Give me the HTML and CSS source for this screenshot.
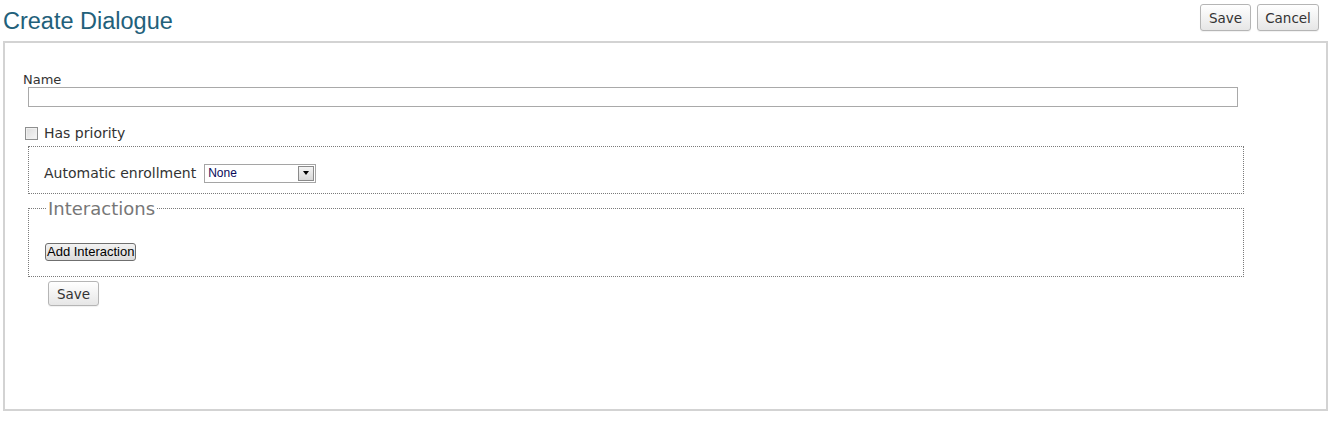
FILE: index.html
```html
<!DOCTYPE html>
<html>
<head>
<meta charset="utf-8">
<link rel="stylesheet" href="styles.css">
</head>
<body>
<div class="header">
  <h1 class="title">Create Dialogue</h1>
  <div class="actions">
    <button class="btn btn-save">Save</button>
    <button class="btn btn-cancel">Cancel</button>
  </div>
</div>
<div class="box">
  <div class="form">
    <label class="name-label">Name</label>
    <div class="text-input"></div>
    <div class="check-row">
      <span class="checkbox"></span>
      <span class="check-label">Has priority</span>
    </div>
    <fieldset class="group plain">
      <div class="enroll-row">
        <span class="enroll-label">Automatic enrollment</span>
        <div class="select">
          <span class="select-value">None</span>
          <span class="select-arrow"><span class="tri"></span></span>
        </div>
      </div>
    </fieldset>
    <fieldset class="group interactions">
      <legend class="legend">Interactions</legend>
      <button class="add-btn">Add Interaction</button>
    </fieldset>
    <button class="btn btn-save save-bottom">Save</button>
  </div>
</div>
</body>
</html>
```
FILE: styles.css
```css
html, body {
  margin: 0;
  padding: 0;
  background: #fff;
}
body {
  padding: 0 6px 0 3px;
  font-family: "DejaVu Sans", Verdana, sans-serif;
  color: #333;
}
.header {
  height: 41px;
  display: flex;
  justify-content: space-between;
  align-items: flex-start;
  padding-right: 9px;
}
.title {
  margin: 8px 0 0 0;
  font-family: "Liberation Sans", Arial, sans-serif;
  font-weight: normal;
  font-size: 23.5px;
  line-height: normal;
  color: #22607a;
}
.actions {
  display: flex;
  gap: 6px;
  margin-top: 4px;
}
.btn {
  box-sizing: border-box;
  font-family: "DejaVu Sans", Verdana, sans-serif;
  font-size: 13.5px;
  color: #333;
  height: 27px;
  padding: 0;
  border: 1px solid #b5b5b5;
  border-radius: 3px;
  background: linear-gradient(#ffffff, #e6e6e6);
  box-shadow: 0 1px 1px rgba(0,0,0,0.06);
  cursor: pointer;
}
.btn-save {
  width: 51px;
}
.btn-cancel {
  width: 62px;
}
.box {
  box-sizing: border-box;
  height: 370px;
  border: 2px solid #d3d3d3;
  padding: 0 0 0 18px;
}
.form {
  width: 1221px;
  display: flex;
  flex-direction: column;
  align-items: flex-start;
}
.name-label {
  margin-top: 29px;
  font-size: 13px;
  line-height: 15px;
  color: #333;
}
.text-input {
  box-sizing: border-box;
  margin-left: 5px;
  width: 1210px;
  height: 20px;
  border: 1px solid #a9a9a9;
  background: #fff;
}
.check-row {
  margin-top: 16px;
  margin-left: 2px;
  height: 20px;
  display: flex;
  align-items: center;
  gap: 6px;
}
.checkbox {
  box-sizing: border-box;
  width: 13px;
  height: 13px;
  border: 1px solid #8e8f8f;
  background: linear-gradient(135deg, #dcdcdc, #f6f6f6);
  box-shadow: inset 0 0 0 1px #f0f0f0;
}
.check-label {
  font-size: 14px;
  color: #333;
}
.group {
  box-sizing: border-box;
  margin: 0 0 0 5px;
  width: 1216px;
  border: 1px dotted #7a7a7a;
  padding: 0;
  min-inline-size: 0;
}
.plain {
  margin-top: 3px;
}
.enroll-row {
  margin: 16px 0 10px 15px;
  height: 20px;
  display: flex;
  align-items: center;
  gap: 8px;
}
.enroll-label {
  font-size: 14px;
  color: #333;
}
.select {
  box-sizing: border-box;
  width: 112px;
  height: 19px;
  border: 1px solid #a5a5a5;
  display: flex;
  align-items: stretch;
  background: #fff;
}
.select-value {
  flex: 1;
  font-family: "Liberation Sans", Arial, sans-serif;
  font-size: 12px;
  line-height: 17px;
  padding-left: 3px;
  color: #0a0a5a;
}
.select-arrow {
  box-sizing: border-box;
  width: 16px;
  margin: 1px 1px 1px 0;
  border: 1px solid #8a8a8a;
  background: linear-gradient(#f4f4f4, #d8d8d8);
  display: flex;
  align-items: center;
  justify-content: center;
}
.tri {
  width: 0;
  height: 0;
  border-left: 3.5px solid transparent;
  border-right: 3.5px solid transparent;
  border-top: 4px solid #000;
}
.interactions {
  margin-top: 4px;
  padding: 0 0 15px 16px;
}
.legend {
  margin-left: 2px;
  padding: 0 1px;
  font-size: 18px;
  line-height: 21px;
  color: #777;
}
.add-btn {
  display: block;
  margin-top: 24px;
  height: 18px;
  padding: 0 1px;
  font-family: "Liberation Sans", Arial, sans-serif;
  font-size: 13px;
  line-height: 16px;
  color: #000;
  border: 1px solid #6f6f6f;
  border-radius: 3px;
  background: linear-gradient(#f2f2f2, #dcdcdc);
}
.save-bottom {
  margin-top: 4px;
  margin-left: 25px;
  height: 25px;
}
```
